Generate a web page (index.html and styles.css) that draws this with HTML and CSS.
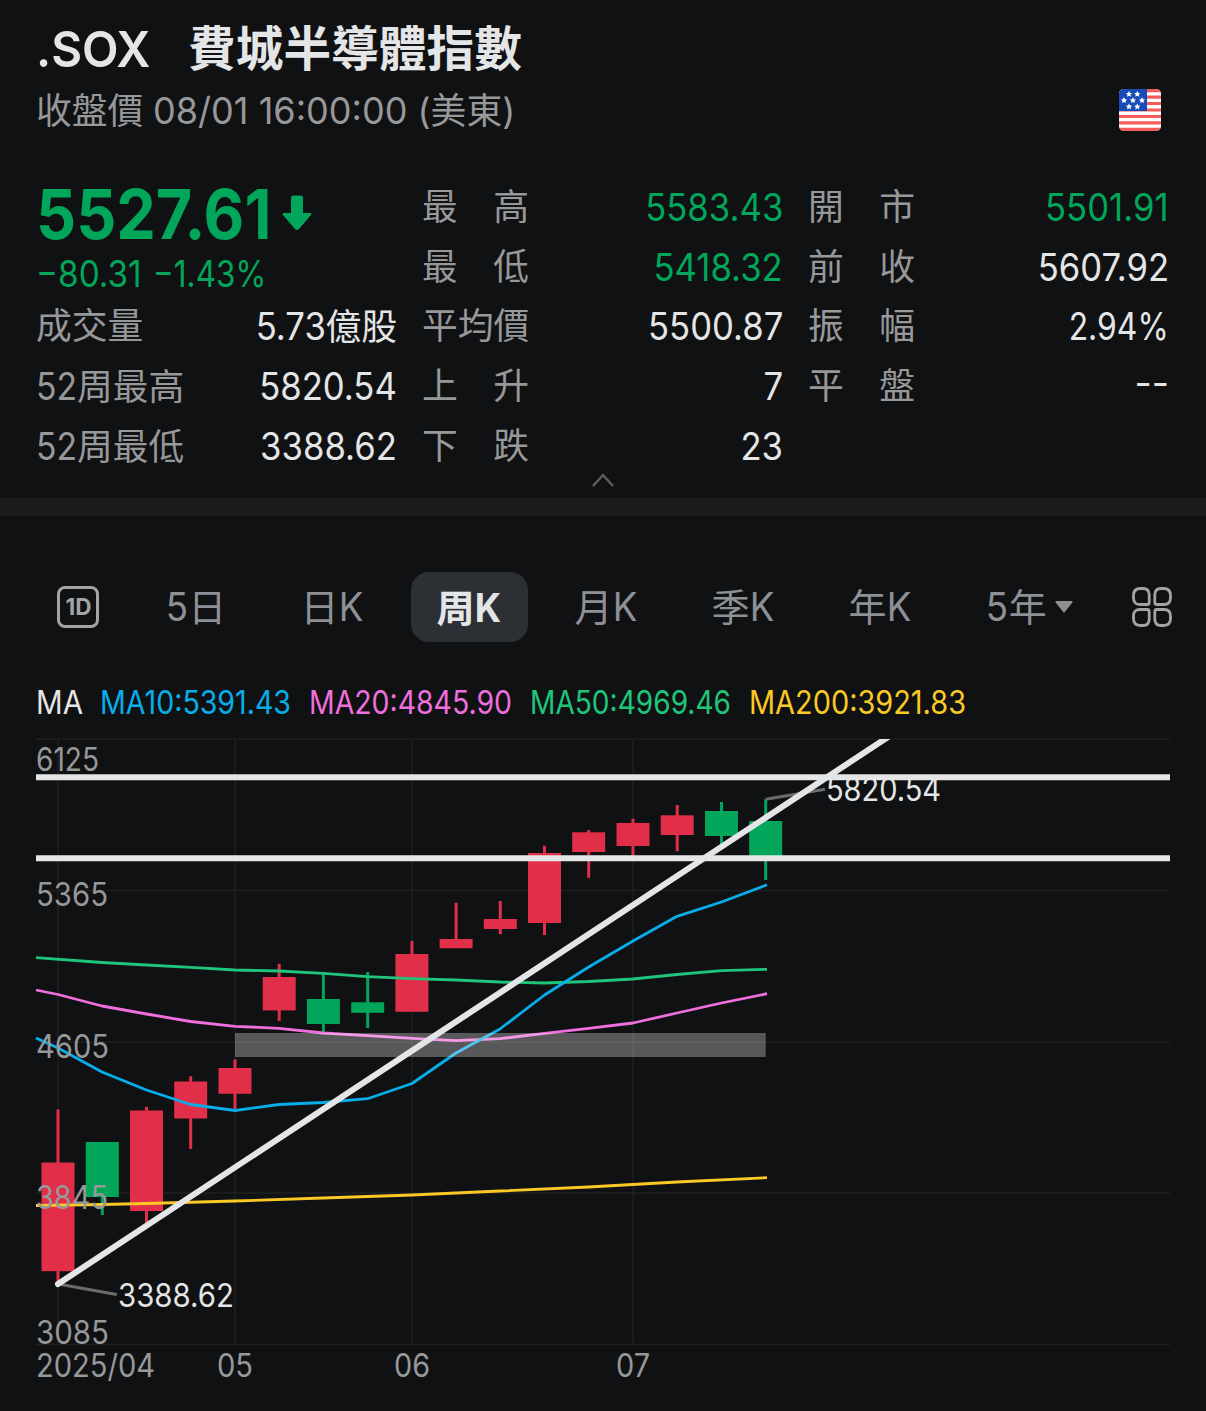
FILE: index.html
```html
<!DOCTYPE html>
<html lang="zh-Hant">
<head>
    <meta charset="UTF-8">
    <meta name="viewport" content="width=device-width, initial-scale=1.0">
    <title>.SOX 費城半導體指數</title>
    <link rel="stylesheet" href="styles.css">
</head>
<body>
    <!-- Header -->
    <header class="header">
        <h1><span class="symbol">.SOX</span><span class="name">費城半導體指數</span></h1>
        <div class="status">
            <p>收盤價 <span class="time">08/01 16:00:00</span> (美東)</p>
            <svg class="flag" width="42" height="42" viewBox="0 0 42 42">
                <defs>
                    <clipPath id="flagClip"><rect width="42" height="42" rx="5"/></clipPath>
                    <path id="star" d="M0-3.2L1-1.1 3.1-.9 1.5.6 2 2.8 0 1.7-2 2.8-1.5.6-3.1-.9-1-1.1z"/>
                </defs>
                <g clip-path="url(#flagClip)">
                    <rect width="42" height="42" fill="#fff"/>
                    <path d="M0 1.6H42M0 8.1H42M0 14.5H42M0 21H42M0 27.5H42M0 33.9H42M0 40.4H42" stroke="#f65b5b" stroke-width="3.2"/>
                    <rect width="28" height="22" fill="#174bb5"/>
                    <g fill="#fff">
                        <use href="#star" x="10" y="5"/>
                        <use href="#star" x="18.3" y="5"/>
                        <use href="#star" x="5" y="11.3"/>
                        <use href="#star" x="14" y="11.3"/>
                        <use href="#star" x="23" y="11.3"/>
                        <use href="#star" x="10" y="17.6"/>
                        <use href="#star" x="18.3" y="17.6"/>
                    </g>
                </g>
            </svg>
        </div>
    </header>

    <!-- Quote -->
    <section class="quote">
        <div class="col">
            <div class="price-box">
                <div class="price down">
                    <span class="last">5527.61</span>
                    <svg width="30" height="36" viewBox="0 0 30 36"><path d="M11 .5H19Q21 .5 21 2.500V18H28Q30.500 18 29 20L17 34Q15 36 13 34L1 20Q-.5 18 2 18H9V2.500Q9 .5 11 .5Z" fill="currentColor"/></svg>
                </div>
                <div class="change down"><span>−80.31</span><span class="pct">−1.43%</span></div>
            </div>
            <div class="row"><span class="label">成交量</span><span class="value"><span class="num">5.73</span>億股</span></div>
            <div class="row"><span class="label"><span class="lead">52</span>周最高</span><span class="value num">5820.54</span></div>
            <div class="row"><span class="label"><span class="lead">52</span>周最低</span><span class="value num">3388.62</span></div>
        </div>
        <div class="col">
            <div class="row"><span class="label wide"><i>最</i><i>高</i></span><span class="value num down">5583.43</span></div>
            <div class="row"><span class="label wide"><i>最</i><i>低</i></span><span class="value num down">5418.32</span></div>
            <div class="row"><span class="label">平均價</span><span class="value num">5500.87</span></div>
            <div class="row"><span class="label wide"><i>上</i><i>升</i></span><span class="value num">7</span></div>
            <div class="row"><span class="label wide"><i>下</i><i>跌</i></span><span class="value num">23</span></div>
        </div>
        <div class="col">
            <div class="row"><span class="label wide"><i>開</i><i>市</i></span><span class="value num down">5501.91</span></div>
            <div class="row"><span class="label wide"><i>前</i><i>收</i></span><span class="value num">5607.92</span></div>
            <div class="row"><span class="label wide"><i>振</i><i>幅</i></span><span class="value num narrow">2.94%</span></div>
            <div class="row"><span class="label wide"><i>平</i><i>盤</i></span><span class="value num none">--</span></div>
        </div>
    </section>
    <div class="collapse">
        <svg width="22" height="14" viewBox="0 0 22 14"><path d="M1 13L11 2L21 13" fill="none" stroke="#5c5d5f" stroke-width="2.500"/></svg>
    </div>

    <!-- Period tabs -->
    <nav class="tabs">
        <svg class="day-icon" width="42" height="42" viewBox="0 0 42 42">
            <rect x="1.500" y="1.500" width="39" height="39" rx="6.500" fill="none" stroke="#a3a4a6" stroke-width="3"/>
            <text x="8.500" y="29" textLength="26" lengthAdjust="spacingAndGlyphs">1D</text>
        </svg>
        <a class="tab"><span><b class="t">5</b>日</span></a>
        <a class="tab"><span>日<b class="t">K</b></span></a>
        <a class="tab active"><span>周<b class="t">K</b></span></a>
        <a class="tab"><span>月<b class="t">K</b></span></a>
        <a class="tab"><span>季<b class="t">K</b></span></a>
        <a class="tab"><span>年<b class="t">K</b></span></a>
        <a class="tab more"><span><b class="t">5</b>年</span><svg width="18" height="12" viewBox="0 0 18 12"><path d="M1.500 0H16.500Q18.500 .3 17 2L10 10.800Q9 12 8 10.800L1 2Q-.5 .3 1.500 0Z" fill="#8e8f91"/></svg></a>
        <svg class="grid-icon" width="40" height="40" viewBox="0 0 40 40" fill="none" stroke="#a3a4a6" stroke-width="2.800">
            <path d="M8.500 1.500H11Q17.200 1.500 17.200 8V15.500Q17.200 17.500 15.200 17.500H8Q1.500 17.500 1.500 11V8.500Q1.500 1.500 8.500 1.500Z"/>
            <path d="M31.500 1.500H29Q22.800 1.500 22.800 8V15.500Q22.800 17.500 24.800 17.500H32Q38.500 17.500 38.500 11V8.500Q38.500 1.500 31.500 1.500Z"/>
            <path d="M8.500 38.500H11Q17.200 38.500 17.200 32V24.500Q17.200 22.500 15.200 22.500H8Q1.500 22.500 1.500 29V31.500Q1.500 38.500 8.500 38.500Z"/>
            <path d="M31.500 38.500H29Q22.800 38.500 22.800 32V24.500Q22.800 22.500 24.800 22.500H32Q38.500 22.500 38.500 29V31.500Q38.500 38.500 31.500 38.500Z"/>
        </svg>
    </nav>

    <!-- Weekly chart -->
    <svg class="chart" width="1206" height="741" viewBox="0 670 1206 741">
        <defs><clipPath id="plot"><rect x="36" y="739" width="1134" height="606"/></clipPath></defs>

        <g class="legend">
            <text x="36" y="713.500" textLength="47" lengthAdjust="spacingAndGlyphs" fill="#e4e5e6">MA</text>
            <text x="100" y="713.500" textLength="191" lengthAdjust="spacingAndGlyphs" fill="#08aee9">MA10:5391.43</text>
            <text x="309" y="713.500" textLength="203" lengthAdjust="spacingAndGlyphs" fill="#ef6fdc">MA20:4845.90</text>
            <text x="530" y="713.500" textLength="201" lengthAdjust="spacingAndGlyphs" fill="#1fc57b">MA50:4969.46</text>
            <text x="749" y="713.500" textLength="217" lengthAdjust="spacingAndGlyphs" fill="#fbc926">MA200:3921.83</text>
        </g>

        <path class="grid" d="M36 739H1170M36 890.500H1170M36 1042H1170M36 1193H1170M36 1344.500H1170M58 739V1345M235 739V1345M412 739V1345M633 739V1345"/>

        <g class="up">
            <path d="M58 1109.500V1284M146.500 1106.700V1223M190.700 1076.300V1149M235 1059.500V1110M279.200 963.700V1021M411.900 941V1011M456.100 902.700V948M500.300 901V934.300M544.500 845.700V935M588.700 830V877.700M633 818.700V860M677.200 805V851.300"/>
            <rect x="41.500" y="1162.500" width="33" height="108.700"/>
            <rect x="130" y="1110.500" width="33" height="100.500"/>
            <rect x="174.200" y="1081.500" width="33" height="37"/>
            <rect x="218.500" y="1068" width="33" height="25.800"/>
            <rect x="262.700" y="977" width="33" height="33.400"/>
            <rect x="395.400" y="954" width="33" height="57.800"/>
            <rect x="439.600" y="939" width="33" height="9.300"/>
            <rect x="483.800" y="919" width="33" height="10"/>
            <rect x="528" y="853" width="33" height="70"/>
            <rect x="572.200" y="832.300" width="33" height="19.700"/>
            <rect x="616.500" y="823" width="33" height="23"/>
            <rect x="660.700" y="815.300" width="33" height="19.700"/>
        </g>
        <g class="fall">
            <path d="M102.300 1142V1215M323.400 973.500V1032M367.700 972V1028M721.500 802V846M765.700 799.300V880"/>
            <rect x="85.800" y="1142" width="33" height="55"/>
            <rect x="306.900" y="999" width="33" height="25"/>
            <rect x="351.200" y="1002.300" width="33" height="10.500"/>
            <rect x="705" y="811" width="33" height="25"/>
            <rect x="749.200" y="821" width="33" height="37"/>
        </g>

        <g class="ma">
            <polyline stroke="#fbc926" points="36,1205.5 102,1204.5 146.5,1203.5 235,1201 323,1198 412,1195 500,1191 588.7,1187 677,1182 767,1177.7"/>
            <polyline stroke="#1fc57b" points="36,957.7 102,962.5 146.5,965 190.7,967.3 235,970 279,971 323.4,973.3 367.6,976.7 412,978.7 456,980 500,982 544.5,983 588.7,981.5 633,979 677,974.5 721.5,970.7 767,969.3"/>
            <polyline stroke="#ef6fdc" points="36,990 58,994.5 102,1006 146.5,1014 190.7,1021.5 235,1026.3 279,1028.3 323.4,1033 367.6,1035.7 412,1038.3 456,1040.7 500,1038.7 544.5,1033.3 588.7,1028.3 633,1023 677,1013 721.5,1003 767,993.7"/>
            <polyline stroke="#08aee9" points="36,1038 58,1048 102,1072 146.5,1090 190.7,1104.5 235,1110.5 279,1104.5 323.4,1102.5 367.6,1098.7 412,1083.5 456,1053 500,1029 544.5,995 588.7,967 633,941 677,916.3 721.5,902 767,884.8"/>
        </g>

        <rect x="235" y="1033" width="530.700" height="24" fill="#fff" fill-opacity=".3"/>

        <path class="pointer" d="M58 1284L116.700 1294.500M765.700 799.300L825 789.300"/>
        <g class="mark">
            <text x="118" y="1306.500" textLength="116" lengthAdjust="spacingAndGlyphs">3388.62</text>
            <text x="826" y="801" textLength="115" lengthAdjust="spacingAndGlyphs">5820.54</text>
        </g>

        <g class="axis">
            <text x="36" y="771" textLength="63" lengthAdjust="spacingAndGlyphs">6125</text>
            <text x="36" y="906" textLength="72" lengthAdjust="spacingAndGlyphs">5365</text>
            <text x="36" y="1057.500" textLength="73" lengthAdjust="spacingAndGlyphs">4605</text>
            <text x="36" y="1208.500" textLength="72" lengthAdjust="spacingAndGlyphs">3845</text>
            <text x="36" y="1343.500" textLength="73" lengthAdjust="spacingAndGlyphs">3085</text>
            <text x="36" y="1376.500" textLength="119" lengthAdjust="spacingAndGlyphs">2025/04</text>
            <text x="217" y="1376.500" textLength="36" lengthAdjust="spacingAndGlyphs">05</text>
            <text x="394" y="1376.500" textLength="36" lengthAdjust="spacingAndGlyphs">06</text>
            <text x="616" y="1376.500" textLength="34" lengthAdjust="spacingAndGlyphs">07</text>
        </g>

        <g class="drawn" clip-path="url(#plot)">
            <path d="M30 777.300H1180M30 858.300H1180"/>
            <path d="M58 1284L917 717.900"/>
        </g>
    </svg>
</body>
</html>
```
FILE: styles.css
```css
/* General */
* {
    box-sizing: border-box;
}

body {
    margin: 0;
    width: 1206px;
    height: 1411px;
    overflow: hidden;
    background-color: #101113;
    color: #e4e5e6;
    font-family: Inter, "Noto Sans CJK TC", sans-serif;
    font-size: 35.800px;
}

h1, p {
    margin: 0;
}

/* Header */
.header {
    height: 177px;
    padding: 20px 37px 0 36px;
}

h1 {
    display: flex;
    height: 58px;
    line-height: 58px;
    font-size: 47.700px;
    font-weight: 700;
}

.symbol {
    width: 152px;
    font-size: 50px;
    font-weight: 600;
    transform: scaleX(.95);
    transform-origin: left;
}

.status {
    display: flex;
    justify-content: space-between;
    height: 64px;
    color: #97989a;
}

.status p {
    line-height: 66px;
    white-space: pre;
}

.time {
    display: inline-block;
    width: 254px;
    font-size: 37px;
    transform: scaleX(.975);
    transform-origin: left;
}

.flag {
    margin: 11px 8px 0 0;
}

/* Quote */
.quote {
    display: flex;
    gap: 26px;
    height: 296px;
    padding: 0 37px;
}

.col {
    width: 360px;
}

.row {
    display: flex;
    justify-content: space-between;
    height: 59.700px;
    line-height: 61.500px;
}

.label {
    margin-left: -1px;
    color: #97989a;
}

.wide {
    display: flex;
    justify-content: space-between;
    width: 107px;
}

.wide i {
    font-style: normal;
}

.value {
    white-space: nowrap;
}

.num {
    display: inline-block;
    font-size: 37.500px;
    transform: scaleX(.925);
    transform-origin: right;
}

.narrow {
    transform: scaleX(.85);
}

.none {
    line-height: 54px;
    transform: scaleX(1);
}

.lead {
    display: inline-block;
    width: 41px;
    font-size: 37.500px;
    transform: scaleX(.9);
    transform-origin: left;
}

.down {
    color: #02a65a;
}

.price-box {
    height: 119.400px;
}

.price {
    display: flex;
    height: 76px;
    line-height: 75px;
}

.price svg {
    margin-top: 18px;
}

.last {
    width: 245px;
    margin-left: -1px;
    margin-right: 1px;
    font-size: 69px;
    font-weight: 700;
    transform: scaleX(.91);
    transform-origin: left;
}

.change {
    display: flex;
    line-height: 41px;
    font-size: 37px;
}

.change span {
    width: 118px;
    margin-left: -1px;
    transform: scaleX(.9);
    transform-origin: left;
}

.change .pct {
    transform: scaleX(.85);
}

.collapse {
    display: flex;
    justify-content: center;
    height: 43px;
    border-bottom: 18px solid #1a1b1d;
}

/* Tabs */
.tabs {
    display: flex;
    align-items: center;
    height: 154px;
    padding: 28px 34px 0 57px;
    font-size: 38px;
    color: #8d9095;
}

.day-icon {
    margin-right: 28px;
}

.day-icon text {
    font-size: 23px;
    font-weight: 700;
    fill: #a3a4a6;
}

.tab {
    display: flex;
    align-items: center;
    justify-content: center;
    width: 137px;
    height: 70px;
    line-height: 71px;
    white-space: nowrap;
}

.t {
    display: inline-block;
    font-size: 39px;
    font-weight: inherit;
    transform: scaleX(.94);
}

.active span {
    width: 117px;
    height: 70px;
    border-radius: 18px;
    background-color: #2c2f34;
    color: #e4e5e6;
    font-weight: 700;
    text-align: center;
}

.more {
    padding-left: 23px;
}

.more svg {
    margin-left: 8px;
}

.grid-icon {
    margin-left: auto;
}

/* Chart */
.chart {
    display: block;
}

.chart text {
    font-size: 32px;
}

.grid {
    stroke: #1e1f21;
    stroke-width: 1.500;
}

.up {
    fill: #e12e49;
    stroke: none;
}

.fall {
    fill: #02a65a;
}

.up path {
    stroke: #e12e49;
    stroke-width: 3;
}

.fall path {
    stroke: #02a65a;
    stroke-width: 3;
}

.ma {
    fill: none;
    stroke-width: 2.800;
    stroke-linejoin: round;
}

.pointer {
    stroke: #6b6c6e;
    stroke-width: 3;
}

.mark {
    fill: #e4e5e6;
}

.axis {
    fill: #97989a;
}

.drawn {
    stroke: #e4e5e7;
    stroke-width: 6;
    stroke-linecap: round;
}
```
